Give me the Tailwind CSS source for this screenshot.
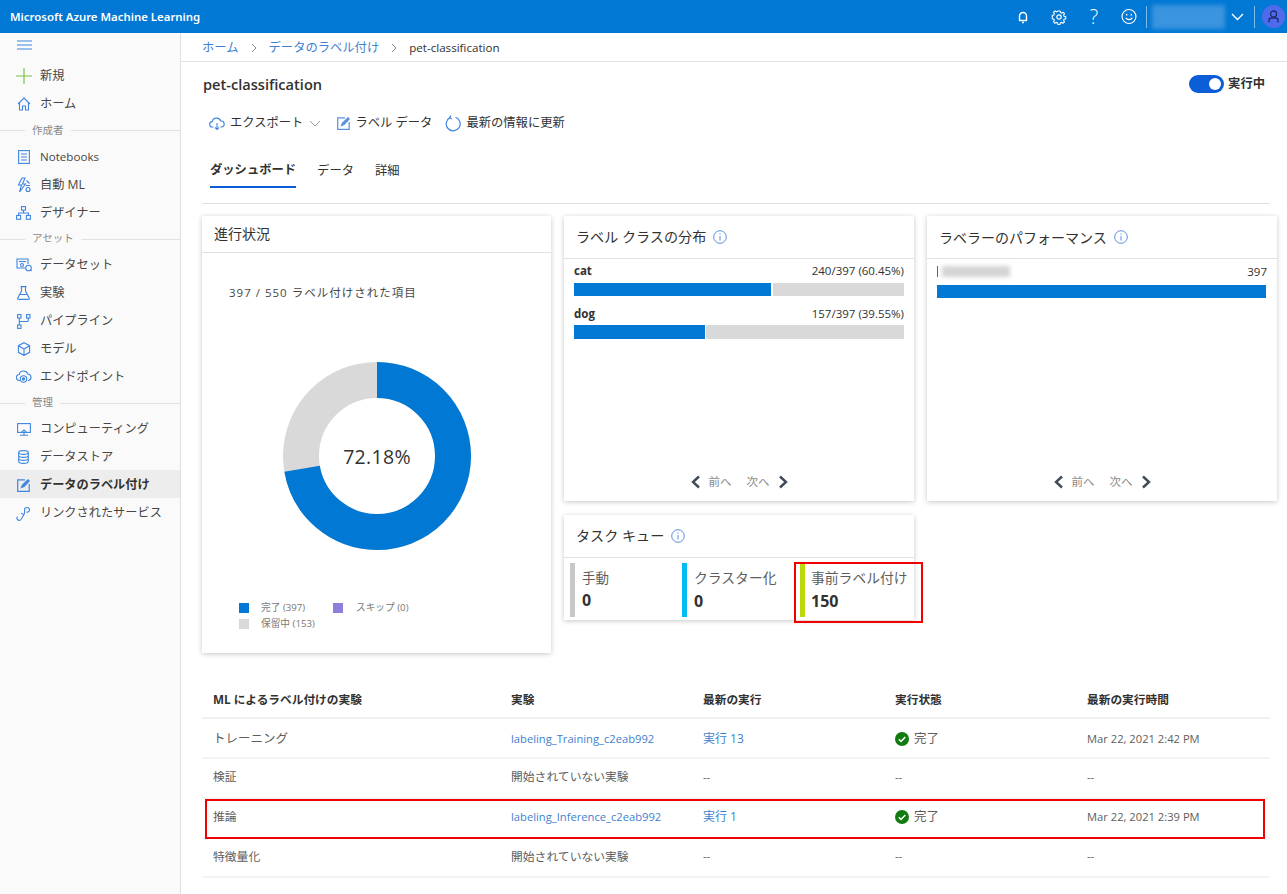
<!doctype html>
<html>
<head>
  <meta charset="UTF-8">
  <meta name="viewport" content="width=device-width, initial-scale=1.0">
  <script src="https://cdn.jsdelivr.net/npm/@tailwindcss/browser@4"></script>
</head>
<body class="font-['Open_Sans','Noto_Sans_CJK_JP',sans-serif] text-[12px] text-[#323130] bg-white">
<div class="w-[1287px] h-[894px] overflow-hidden flex flex-col">

  <!-- top bar -->
  <header class="h-[33px] shrink-0 bg-[#0078d4] flex items-center text-white">
    <div class="pl-[10px] text-[11.400px] font-semibold font-['Noto_Sans',sans-serif] flex-1">Microsoft Azure Machine Learning</div>
    <div class="flex items-center">
      <div class="w-[16px] flex justify-center">
        <svg width="14" height="14" viewBox="0 0 14 14" fill="none" stroke="white" stroke-width="1.4"><path d="M3.5 10.5V6a3.5 3.5 0 0 1 7 0v4.5z" stroke-linejoin="round"/><path d="M6 12.5h2" /></svg>
      </div>
      <div class="w-[16px] ml-[20px] flex justify-center">
        <svg width="16" height="16" viewBox="0 0 16 16" fill="none" stroke="white" stroke-width="1.2"><circle cx="8" cy="8" r="2.2"/><path d="M6.8 1.3h2.4l.4 1.8 1.3.6 1.6-1 1.6 1.7-1 1.5.6 1.4 1.8.4v2.4l-1.8.4-.6 1.3 1 1.6-1.7 1.6-1.5-1-1.4.6-.4 1.8H6.8l-.4-1.8-1.3-.6-1.6 1-1.6-1.7 1-1.5-.6-1.4-1.8-.4V6.1l1.8-.4.6-1.3-1-1.6 1.7-1.6 1.5 1 1.4-.6z" transform="translate(0.8 0.8) scale(0.9)"/></svg>
      </div>
      <div class="w-[16px] ml-[19px] text-center text-[20px] font-light leading-none">?</div>
      <div class="w-[16px] ml-[19px] flex justify-center">
        <svg width="17" height="17" viewBox="0 0 17 17" fill="none" stroke="white" stroke-width="1.2"><circle cx="8.5" cy="8.5" r="7.4"/><circle cx="6" cy="6.6" r=".9" fill="white" stroke="none"/><circle cx="11" cy="6.6" r=".9" fill="white" stroke="none"/><path d="M5 10c1.6 2.4 5.4 2.4 7 0"/></svg>
      </div>
      <div class="w-px h-[22px] ml-[9px] bg-white/50"></div>
      <div class="w-[73px] h-[24px] ml-[5px] bg-[#3a94de] blur-[2px]"></div>
      <svg class="ml-[6px]" width="13" height="8" viewBox="0 0 13 8" fill="none" stroke="white" stroke-width="1.4"><path d="M1 1l5.5 5.5L12 1"/></svg>
      <div class="w-px h-[22px] ml-[10px] bg-white/50"></div>
      <div class="w-[23px] h-[23px] ml-[7px] mr-[2px] rounded-full bg-[#4f6bed] flex items-center justify-center">
        <svg width="11" height="13" viewBox="0 0 11 13" fill="none" stroke="#1f2a6b" stroke-width="1.3"><circle cx="5.5" cy="4" r="3"/><path d="M1 12.5V10.500a2.500 2.500 0 0 1 2.500-2.500h4a2.500 2.500 0 0 1 2.500 2.500v2"/></svg>
      </div>
    </div>
  </header>

  <div class="flex flex-1 min-h-0">
    <!-- left nav -->
    <nav class="w-[181px] shrink-0 bg-[#fafafa] border-r border-[#e1e1e1] text-[12.200px] text-[#484644] [&>div]:pt-[2px]">
      <div class="h-6 pb-[2px] pl-[17px] flex items-center mb-1">
        <svg width="15" height="10" viewBox="0 0 15 10" stroke="#3f86e0" stroke-width="1.200"><path d="M0 1h15M0 5h15M0 9h15"/></svg>
      </div>
      <div class="h-7 flex items-center"><span class="w-[40px] flex justify-center pl-[7px]"><svg width="16" height="16" viewBox="0 0 16 16" stroke="#7dc242" stroke-width="1.200"><path d="M8 0v16M0 8h16"/></svg></span>新規</div>
      <div class="h-7 flex items-center"><span class="w-[40px] flex justify-center pl-[7px]"><svg width="14" height="14" viewBox="0 0 14 14" fill="none" stroke="#3f86e0" stroke-width="1.100"><path d="M1 7l6-6 6 6M2.500 6v7h3V9h3v4h3V6"/></svg></span>ホーム</div>

      <div class="h-[25px] flex items-center text-[10.500px] text-[#8a8886]"><span class="w-[25px] h-px bg-[#e1e1e1]"></span><span class="px-[7px]">作成者</span><span class="flex-1 h-px bg-[#e1e1e1]"></span></div>
      <div class="h-7 flex items-center text-[11.600px]"><span class="w-[40px] flex justify-center pl-[7px]"><svg width="12" height="14" viewBox="0 0 12 14" fill="none" stroke="#3f86e0" stroke-width="1.100"><rect x=".6" y=".6" width="10.800" height="12.800"/><path d="M3 4h6M3 7h6M3 10h6"/></svg></span>Notebooks</div>
      <div class="h-7 flex items-center"><span class="w-[40px] flex justify-center pl-[7px]"><svg width="14" height="16" viewBox="0 0 14 16" fill="none" stroke="#3f86e0" stroke-width="1.100"><path d="M5 1L1.500 8h3l-2 7 6-8H5.500L8 1z"/><circle cx="11" cy="12.500" r="2"/><path d="M9.500 3.500l3 3M9 8.500h4"/></svg></span>自動 ML</div>
      <div class="h-7 flex items-center"><span class="w-[40px] flex justify-center pl-[7px]"><svg width="15" height="14" viewBox="0 0 15 14" fill="none" stroke="#3f86e0" stroke-width="1.100"><rect x="5.500" y=".6" width="4" height="3.500"/><rect x=".6" y="9.500" width="4" height="3.800"/><rect x="10.400" y="9.500" width="4" height="3.800"/><path d="M7.500 4v3M2.600 9.500V7h9.800v2.500"/></svg></span>デザイナー</div>

      <div class="h-6 flex items-center text-[10.500px] text-[#8a8886]"><span class="w-[25px] h-px bg-[#e1e1e1]"></span><span class="px-[7px]">アセット</span><span class="flex-1 h-px bg-[#e1e1e1]"></span></div>
      <div class="h-7 flex items-center"><span class="w-[40px] flex justify-center pl-[7px]"><svg width="16" height="14" viewBox="0 0 16 14" fill="none" stroke="#3f86e0" stroke-width="1.100"><path d="M9 10H1V1h11v5"/><path d="M3 3.500h7" /><circle cx="6" cy="7" r="1.500"/><circle cx="12.500" cy="10" r="2.800"/><path d="M14.500 12l1 1"/></svg></span>データセット</div>
      <div class="h-7 flex items-center"><span class="w-[40px] flex justify-center pl-[7px]"><svg width="13" height="14" viewBox="0 0 13 14" fill="none" stroke="#3f86e0" stroke-width="1.100"><path d="M3.500 .6h6M4.500 .6v4.400L.8 12a1 1 0 0 0 .9 1.400h9.600a1 1 0 0 0 .9-1.400L8.500 5V.6M3 8.500h7"/></svg></span>実験</div>
      <div class="h-7 flex items-center"><span class="w-[40px] flex justify-center pl-[7px]"><svg width="14" height="15" viewBox="0 0 14 15" fill="none" stroke="#3f86e0" stroke-width="1.100"><rect x=".6" y=".6" width="3.400" height="3.400"/><rect x="9.600" y=".6" width="3.400" height="3.400"/><rect x=".6" y="11" width="3.400" height="3.400"/><path d="M2.300 4v7M11.300 4v2.500a1 1 0 0 1-1 1H2.300"/></svg></span>パイプライン</div>
      <div class="h-7 flex items-center"><span class="w-[40px] flex justify-center pl-[7px]"><svg width="14" height="14" viewBox="0 0 14 14" fill="none" stroke="#3f86e0" stroke-width="1.100"><path d="M7 .7l5.600 3v6.600L7 13.300l-5.600-3V3.700zM1.400 3.700L7 7l5.600-3.300M7 7v6.300"/></svg></span>モデル</div>
      <div class="h-7 flex items-center"><span class="w-[40px] flex justify-center pl-[7px]"><svg width="16" height="14" viewBox="0 0 16 14" fill="none" stroke="#3f86e0" stroke-width="1.100"><path d="M4 10.500H3.500a3 3 0 0 1-.3-6A4.500 4.500 0 0 1 11.800 4a3.300 3.300 0 0 1 .7 6.500H12"/><circle cx="7.500" cy="9" r="3.200"/><circle cx="7.500" cy="9" r="1.100" fill="#3f86e0"/></svg></span>エンドポイント</div>

      <div class="h-6 flex items-center text-[10.500px] text-[#8a8886]"><span class="w-[25px] h-px bg-[#e1e1e1]"></span><span class="px-[7px]">管理</span><span class="flex-1 h-px bg-[#e1e1e1]"></span></div>
      <div class="h-7 flex items-center"><span class="w-[40px] flex justify-center pl-[7px]"><svg width="14" height="13" viewBox="0 0 14 13" fill="none" stroke="#3f86e0" stroke-width="1.100"><rect x=".6" y=".6" width="12.800" height="8.800"/><path d="M7 9.500v2.500M3 12.300h8" /><path d="M4.500 9.500L7 7l2.500 2.500" /></svg></span>コンピューティング</div>
      <div class="h-7 flex items-center"><span class="w-[40px] flex justify-center pl-[7px]"><svg width="11" height="14" viewBox="0 0 11 14" fill="none" stroke="#3f86e0" stroke-width="1.100"><ellipse cx="5.500" cy="2.500" rx="4.800" ry="1.900"/><path d="M.7 2.500v9c0 1 2.100 1.900 4.800 1.900s4.800-.9 4.800-1.900v-9M.7 5.500c0 1 2.100 1.900 4.800 1.900s4.800-.9 4.800-1.900M.7 8.500c0 1 2.100 1.900 4.800 1.900s4.800-.9 4.800-1.900"/></svg></span>データストア</div>
      <div class="h-7 flex items-center bg-[#ededed] font-bold text-[#323130]"><span class="w-[40px] flex justify-center pl-[7px]"><svg width="13" height="13" viewBox="0 0 13 13" fill="none" stroke="#3f86e0" stroke-width="1.200"><path d="M8 .8H.7v11.500h11.500V5"/><path d="M4.500 8.500l1-2.500L11 .8l1.200 1.200L7 7.500z" fill="#3f86e0"/></svg></span>データのラベル付け</div>
      <div class="h-7 flex items-center"><span class="w-[40px] flex justify-center pl-[7px]"><svg width="15" height="15" viewBox="0 0 15 15" fill="none" stroke="#3f86e0" stroke-width="1.100"><path d="M1.500 10.500a2.300 2.300 0 0 0 3.500 3L8 8.500c1-2 .5-3 .5-4.500a2.500 2.500 0 0 1 5 0c0 1.500-1.500 2.500-3 2"/><path d="M5 7.500a2 2 0 0 1 2.500 2"/></svg></span>リンクされたサービス</div>
    </nav>

    <!-- main content -->
    <main class="flex-1 min-w-0">
      <div class="h-[29px] border-b border-[#e1e1e1] pl-[21px] pt-[2px] flex items-center">
        <span class="text-[#3f7fd0] text-[12.300px]">ホーム</span>
        <svg class="mx-[12px]" width="6" height="10" viewBox="0 0 6 10" fill="none" stroke="#8a8886"><path d="M1 1l4 4-4 4"/></svg>
        <span class="text-[#3f7fd0] text-[12.300px]">データのラベル付け</span>
        <svg class="mx-[12px]" width="6" height="10" viewBox="0 0 6 10" fill="none" stroke="#8a8886"><path d="M1 1l4 4-4 4"/></svg>
        <span class="text-[11.600px]">pet-classification</span>
      </div>

      <div class="pl-[21px] pr-[17px]">
        <div class="h-[44px] flex items-center justify-between">
          <h1 class="text-[14.600px] font-semibold pl-px pt-[2px]">pet-classification</h1>
          <div class="flex items-center mr-[5px]">
            <span class="w-[35px] h-[18px] rounded-full bg-[#0b5ed7] flex items-center justify-end pr-[3px]"><span class="w-[12px] h-[12px] rounded-full bg-white"></span></span>
            <span class="ml-[4px] text-[12.300px] font-bold">実行中</span>
          </div>
        </div>

        <div class="h-[32px] pt-[2px] flex items-center pl-[7px] text-[12.300px]">
          <svg width="16" height="13" viewBox="0 0 16 13" fill="none" stroke="#3f86e0" stroke-width="1.100"><path d="M4.500 10H3.500a2.700 2.700 0 0 1-.3-5.400A4.500 4.500 0 0 1 11.800 4 3 3 0 0 1 12.500 10h-1"/><path d="M8 6v6.500M6 10.500l2 2 2-2"/></svg>
          <span class="ml-[5px]">エクスポート</span>
          <svg class="ml-[6px]" width="12" height="7" viewBox="0 0 12 7" fill="none" stroke="#a19f9d"><path d="M1 1l5 5 5-5"/></svg>
          <svg class="ml-[16px]" width="13" height="13" viewBox="0 0 13 13" fill="none" stroke="#5b8fdc" stroke-width="1.200"><path d="M8 .8H.7v11.500h11.500V5"/><path d="M4.500 8.500l1-2.500L11 .8l1.200 1.200L7 7.500z" fill="#5b8fdc"/></svg>
          <span class="ml-[5px]">ラベル データ</span>
          <svg class="ml-[13px]" width="16" height="17" viewBox="0 0 16 17" fill="none" stroke="#3f86e0" stroke-width="1.200"><path d="M5 2.600a7 7 0 1 0 5.500-.4"/><path d="M6 .5L4.500 2.800 7 4"/></svg>
          <span class="ml-[5px]">最新の情報に更新</span>
        </div>

        <div class="mt-[12px] pl-[8px] h-[54px] border-b border-[#e1e1e1] flex gap-[21px] text-[12.300px]">
          <div class="h-[38px] pt-[4px] flex items-center font-semibold border-b-2 border-[#0b5ed7]">ダッシュボード</div>
          <div class="h-[38px] pt-[4px] flex items-center">データ</div>
          <div class="h-[38px] pt-[4px] flex items-center">詳細</div>
        </div>

        <!-- dashboard cards -->
        <div class="mt-[12px] w-[1075px] flex gap-[13px] items-start">
          <section class="w-[349px] h-[437px] bg-white shadow-[0_1px_5px_rgba(0,0,0,0.22)]">
            <div class="h-[37px] pb-[2px] border-b border-[#e1e1e1] pl-[12px] flex items-center text-[14px]">進行状況</div>
            <div class="mt-[31px] pl-[27px] text-[11.500px] text-[#484644] tracking-[1px]">397 / 550 ラベル付けされた項目</div>
            <div class="mt-[61px] flex justify-center pl-[1px]">
              <div class="relative w-[188px] h-[188px]">
                <svg width="188" height="188" viewBox="0 0 188 188" fill="none">
                  <circle cx="94" cy="94" r="76" stroke="#d9d9d9" stroke-width="36"/>
                  <circle cx="94" cy="94" r="76" stroke="#0078d4" stroke-width="36" stroke-dasharray="344.700 477.500" transform="rotate(-90 94 94)"/>
                </svg>
                <div class="absolute inset-0 flex items-center justify-center text-[19.500px] tracking-[0.3px]">72.18%</div>
              </div>
            </div>
            <div class="mt-[50px] pl-[37px] text-[9.700px] text-[#7a7876]">
              <div class="flex items-center h-[16px]">
                <span class="w-[10px] h-[10px] bg-[#0078d4]"></span><span class="ml-[12px] w-[72px]">完了 (397)</span>
                <span class="w-[10px] h-[10px] bg-[#8f7fdb]"></span><span class="ml-[13px]">スキップ (0)</span>
              </div>
              <div class="flex items-center h-[16px]">
                <span class="w-[10px] h-[10px] bg-[#d9d9d9]"></span><span class="ml-[12px]">保留中 (153)</span>
              </div>
            </div>
          </section>

          <div class="grid grid-cols-[350px_350px] gap-x-[13px] gap-y-[14px]">
            <section class="h-[285px] flex flex-col bg-white shadow-[0_1px_5px_rgba(0,0,0,0.22)]">
              <div class="h-[43px] shrink-0 border-b border-[#e1e1e1] pl-[12px] flex items-center text-[14.100px]">ラベル クラスの分布
                <svg class="ml-[7px]" width="14" height="14" viewBox="0 0 14 14" fill="none" stroke="#5b8fdc"><circle cx="7" cy="7" r="6.300"/><path d="M7 6v4.500M7 3.500v1.200"/></svg>
              </div>
              <div class="px-[10px] pt-[3px] flex-1">
                <div class="flex justify-between h-[17px] items-center text-[11.500px]"><b>cat</b><span>240/397 (60.45%)</span></div>
                <div class="mt-[4px] flex gap-[2px] h-[13px]"><div class="w-[197px] bg-[#0078d4]"></div><div class="flex-1 bg-[#d9d9d9]"></div></div>
                <div class="mt-[9px] flex justify-between h-[17px] items-center text-[11.500px]"><b>dog</b><span>157/397 (39.55%)</span></div>
                <div class="mt-[3px] flex gap-px h-[14px]"><div class="w-[131px] bg-[#0078d4]"></div><div class="flex-1 bg-[#d9d9d9]"></div></div>
              </div>
              <div class="h-[38px] flex items-center justify-center text-[11.500px] text-[#8a8886]">
                <svg width="11" height="14" viewBox="0 0 11 14" fill="none" stroke="#3f4a57" stroke-width="2.400"><path d="M9 1.500L3 7l6 5.500"/></svg>
                <span class="ml-[8px]">前へ</span><span class="ml-[15px]">次へ</span>
                <svg class="ml-[8px]" width="11" height="14" viewBox="0 0 11 14" fill="none" stroke="#3f4a57" stroke-width="2.400"><path d="M2 1.500L8 7l-6 5.500"/></svg>
              </div>
            </section>

            <section class="h-[285px] flex flex-col bg-white shadow-[0_1px_5px_rgba(0,0,0,0.22)]">
              <div class="h-[43px] shrink-0 border-b border-[#e1e1e1] pl-[12px] flex items-center text-[14.000px]">ラベラーのパフォーマンス
                <svg class="ml-[7px]" width="14" height="14" viewBox="0 0 14 14" fill="none" stroke="#5b8fdc"><circle cx="7" cy="7" r="6.300"/><path d="M7 6v4.500M7 3.500v1.200"/></svg>
              </div>
              <div class="px-[10px] pt-[4px] flex-1">
                <div class="flex justify-between h-[17px] items-center text-[11.500px]"><span class="flex items-center"><span class="w-px h-[11px] bg-[#8a5a44]"></span><span class="ml-[4px] w-[68px] h-[11px] bg-[#d4d4d4] blur-[2px]"></span></span><span>397</span></div>
                <div class="mt-[5px] h-[13px] w-[329px] bg-[#0078d4]"></div>
              </div>
              <div class="h-[38px] flex items-center justify-center text-[11.500px] text-[#8a8886]">
                <svg width="11" height="14" viewBox="0 0 11 14" fill="none" stroke="#3f4a57" stroke-width="2.400"><path d="M9 1.500L3 7l6 5.500"/></svg>
                <span class="ml-[8px]">前へ</span><span class="ml-[15px]">次へ</span>
                <svg class="ml-[8px]" width="11" height="14" viewBox="0 0 11 14" fill="none" stroke="#3f4a57" stroke-width="2.400"><path d="M2 1.500L8 7l-6 5.500"/></svg>
              </div>
            </section>

            <section class="h-[105px] bg-white shadow-[0_1px_5px_rgba(0,0,0,0.22)]">
              <div class="h-[43px] border-b border-[#e1e1e1] pl-[12px] flex items-center text-[14.100px]">タスク キュー
                <svg class="ml-[7px]" width="14" height="14" viewBox="0 0 14 14" fill="none" stroke="#5b8fdc"><circle cx="7" cy="7" r="6.300"/><path d="M7 6v4.500M7 3.500v1.200"/></svg>
              </div>
              <div class="pt-[5px] pl-[6px] flex h-[59px]">
                <div class="w-[112px] flex border-l-[5px] border-[#c8c8c8] pl-[7px] flex-col">
                  <span class="mt-[5px] text-[13.500px] text-[#605e5c]">手動</span><span class="text-[16px] font-bold leading-[24px]">0</span>
                </div>
                <div class="w-[118px] flex border-l-[5px] border-[#00bcf2] pl-[7px] flex-col">
                  <span class="mt-[5px] text-[13.800px] text-[#605e5c]">クラスター化</span><span class="text-[16px] font-bold leading-[24px]">0</span>
                </div>
                <div class="relative flex border-l-[5px] border-[#bad80a] pl-[6px] flex-col">
                  <span class="mt-[5px] text-[13.800px] text-[#605e5c] whitespace-nowrap">事前ラベル付け</span><span class="text-[16px] font-bold leading-[24px]">150</span>
                  <div class="absolute left-[-11px] top-[-1px] w-[129px] h-[61px] border-2 border-[#f00000]"></div>
                </div>
              </div>
            </section>
          </div>
        </div>

        <!-- experiment table -->
        <div class="mt-[31px] text-[11.200px] text-[#605e5c]">
          <div class="h-[35px] pb-[2px] border-b-2 border-[#f0f0f0] grid grid-cols-[298px_192px_192px_192px_1fr] pl-[11px] items-center text-[11.700px] font-bold text-[#323130]">
            <div>ML によるラベル付けの実験</div><div>実験</div><div>最新の実行</div><div>実行状態</div><div>最新の実行時間</div>
          </div>
          <div class="h-[40px] pt-[2px] border-b-2 border-[#f4f4f4] grid grid-cols-[298px_192px_192px_192px_1fr] pl-[11px] items-center">
            <div class="text-[12.500px]">トレーニング</div><div class="text-[#3f7fd0]">labeling_Training_c2eab992</div><div class="text-[#3f7fd0] text-[12px]">実行 13</div>
            <div class="flex items-center text-[12.500px]"><svg class="mr-[5px]" width="14" height="14" viewBox="0 0 14 14"><circle cx="7" cy="7" r="7" fill="#107c10"/><path d="M3.800 7.300l2.200 2.200 4.300-4.500" fill="none" stroke="white" stroke-width="1.500"/></svg>完了</div>
            <div>Mar 22, 2021 2:42 PM</div>
          </div>
          <div class="h-[40px] pb-[2px] border-b-2 border-[#f4f4f4] grid grid-cols-[298px_192px_192px_192px_1fr] pl-[11px] items-center">
            <div class="text-[11.800px]">検証</div><div class="text-[11.800px]">開始されていない実験</div><div>--</div><div>--</div><div>--</div>
          </div>
          <div class="relative h-[40px] pb-[2px] border-b-2 border-[#f4f4f4] grid grid-cols-[298px_192px_192px_192px_1fr] pl-[11px] items-center">
            <div class="text-[11.800px]">推論</div><div class="text-[#3f7fd0]">labeling_Inference_c2eab992</div><div class="text-[#3f7fd0] text-[12px]">実行 1</div>
            <div class="flex items-center text-[12.500px]"><svg class="mr-[5px]" width="14" height="14" viewBox="0 0 14 14"><circle cx="7" cy="7" r="7" fill="#107c10"/><path d="M3.800 7.300l2.200 2.200 4.300-4.500" fill="none" stroke="white" stroke-width="1.500"/></svg>完了</div>
            <div>Mar 22, 2021 2:39 PM</div>
            <div class="absolute left-[3px] top-0 w-[1060px] h-[40px] border-2 border-[#f00000]"></div>
          </div>
          <div class="h-[39px] pb-[2px] border-b-2 border-[#f4f4f4] grid grid-cols-[298px_192px_192px_192px_1fr] pl-[11px] items-center">
            <div class="text-[11.800px]">特徴量化</div><div class="text-[11.800px]">開始されていない実験</div><div>--</div><div>--</div><div>--</div>
          </div>
        </div>
      </div>
    </main>
  </div>
</div>
</body>
</html>
